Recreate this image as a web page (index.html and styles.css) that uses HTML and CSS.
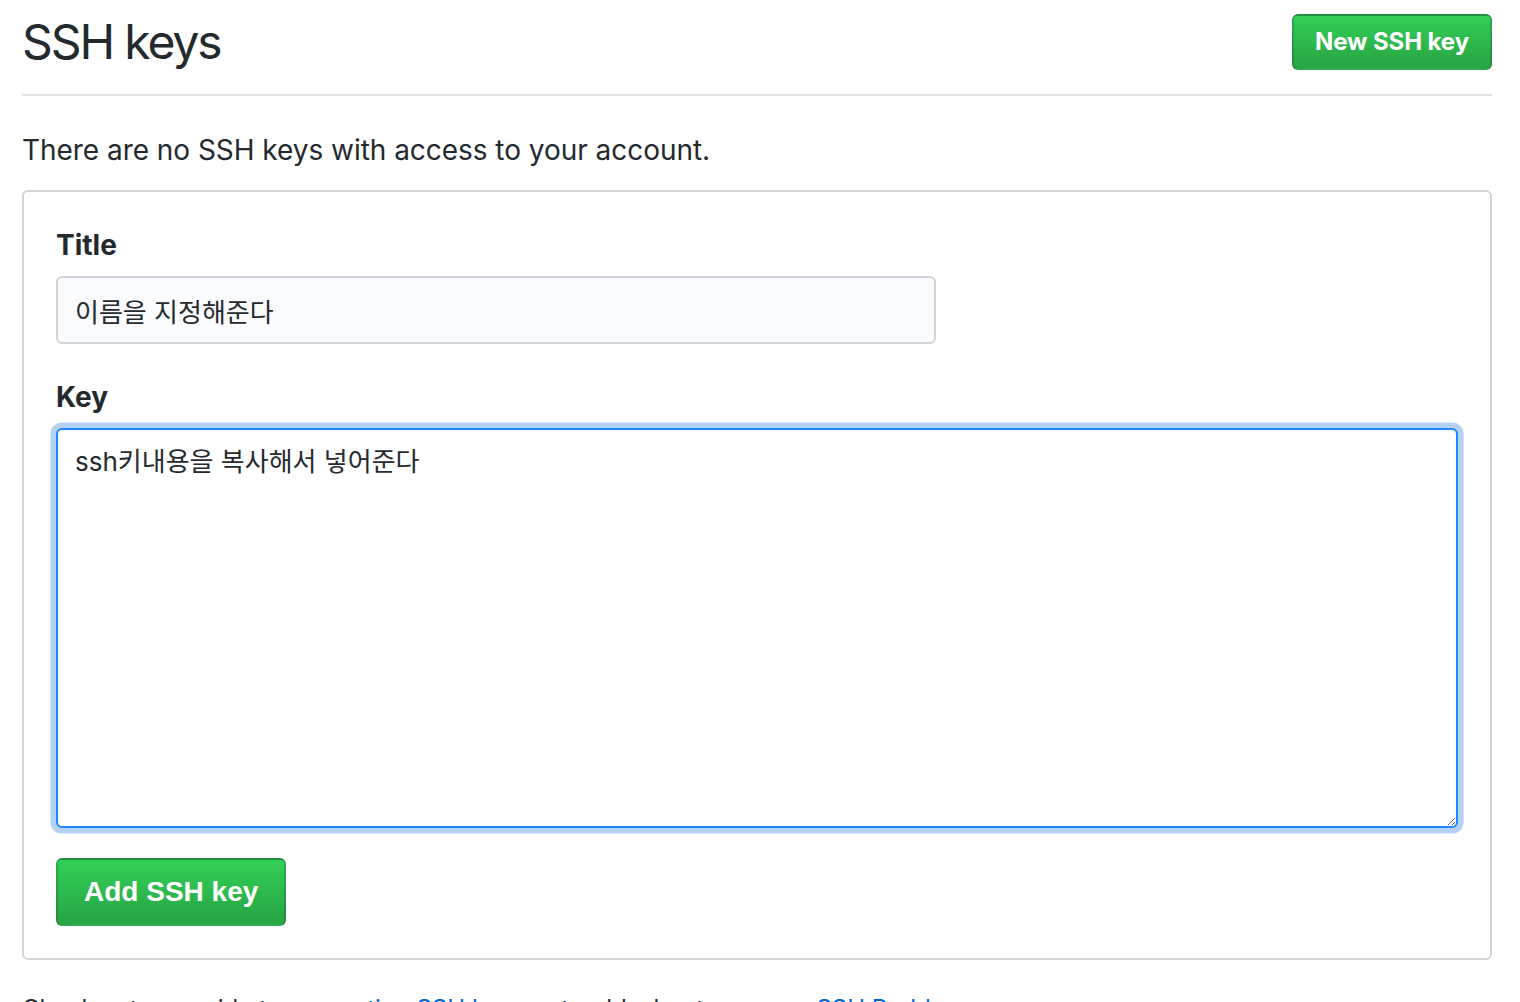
FILE: index.html
```html
<!DOCTYPE html>
<html lang="ko">
<head>
<meta charset="utf-8">
<title>SSH keys</title>
<link rel="stylesheet" href="styles.css">
</head>
<body>
<div class="page">
  <div class="subhead">
    <h2 class="subhead-heading">SSH keys</h2>
    <a class="btn btn-primary btn-sm" href="#">New SSH key</a>
  </div>
  <p class="blankslate-text">There are no SSH keys with access to your account.</p>
  <form class="box">
    <div class="form-group">
      <label class="form-label" for="title">Title</label>
      <input class="form-control title-input" id="title" type="text" value="이름을 지정해준다">
    </div>
    <div class="form-group form-group-last">
      <label class="form-label" for="key">Key</label>
      <textarea class="form-control key-input is-focused" id="key">ssh키내용을 복사해서 넣어준다</textarea>
    </div>
    <button class="btn btn-primary btn-add" type="button">Add SSH key</button>
  </form>
  <p class="help-text">Check out our guide to <a href="#">generating SSH keys</a> or troubleshoot <a href="#">common SSH Problems</a>.</p>
</div>
</body>
</html>
```

FILE: styles.css
```css
html, body {
  margin: 0;
  padding: 0;
  background: #fff;
}

body {
  font-family: Inter, "Noto Sans CJK KR", sans-serif;
  color: #24292e;
  font-size: 28px;
  line-height: 42px;
  overflow: hidden;
}

.page {
  width: 1470px;
  padding-left: 22px;
}

.subhead {
  display: flex;
  align-items: center;
  justify-content: space-between;
  padding-top: 14px;
  padding-bottom: 24px;
  border-bottom: 2px solid #e1e4e8;
}

.subhead-heading {
  margin: 0;
  font-size: 48px;
  font-weight: 400;
  line-height: 56px;
  letter-spacing: -2.1px;
}

.btn {
  display: inline-flex;
  align-items: center;
  justify-content: center;
  box-sizing: border-box;
  border: 2px solid rgba(27, 31, 35, 0.2);
  border-radius: 6px;
  color: #fff;
  text-decoration: none;
  font-weight: 700;
  cursor: pointer;
}

.btn-primary {
  background-image: linear-gradient(-180deg, #34d058 0%, #28a745 90%);
  background-color: #28a745;
}

.btn-sm {
  height: 56px;
  width: 200px;
  font-size: 24px;
  letter-spacing: -0.1px;
}

.blankslate-text {
  margin: 33px 0 19px;
  letter-spacing: -0.04px;
}

.box {
  border: 2px solid #d1d5da;
  border-radius: 6px;
  padding: 32px;
  margin: 0;
}

.form-group {
  display: flex;
  flex-direction: column;
  align-items: flex-start;
  margin-bottom: 32px;
}

.form-group-last {
  margin-bottom: 30px;
}

.form-label {
  font-weight: 700;
  margin-bottom: 10px;
}

.form-control {
  box-sizing: border-box;
  font-family: Inter, "Noto Sans CJK KR", sans-serif;
  font-size: 26px;
  letter-spacing: 0;
  line-height: 40px;
  color: #24292e;
  padding: 12px 17px;
  border: 2px solid #d1d5da;
  border-radius: 6px;
  background: #fafbfc;
  outline: none;
  margin: 0;
}

.title-input {
  width: 880px;
  height: 68px;
}

.key-input {
  width: 1402px;
  height: 400px;
  resize: vertical;
  background: #fff;
}

.key-input.is-focused {
  border-color: #2188ff;
  box-shadow: inset 0 1px 2px rgba(27, 31, 35, 0.075), 0 0 0 5.6px rgba(3, 102, 214, 0.3);
}

.btn-add {
  height: 68px;
  padding: 0 26px;
  font-family: "Liberation Sans", Arial, sans-serif;
  font-size: 28px;
}

.help-text {
  margin: 31px 0 0;
  font-size: 24px;
  line-height: 36px;
}

.help-text a {
  color: #0366d6;
  text-decoration: none;
}
```
